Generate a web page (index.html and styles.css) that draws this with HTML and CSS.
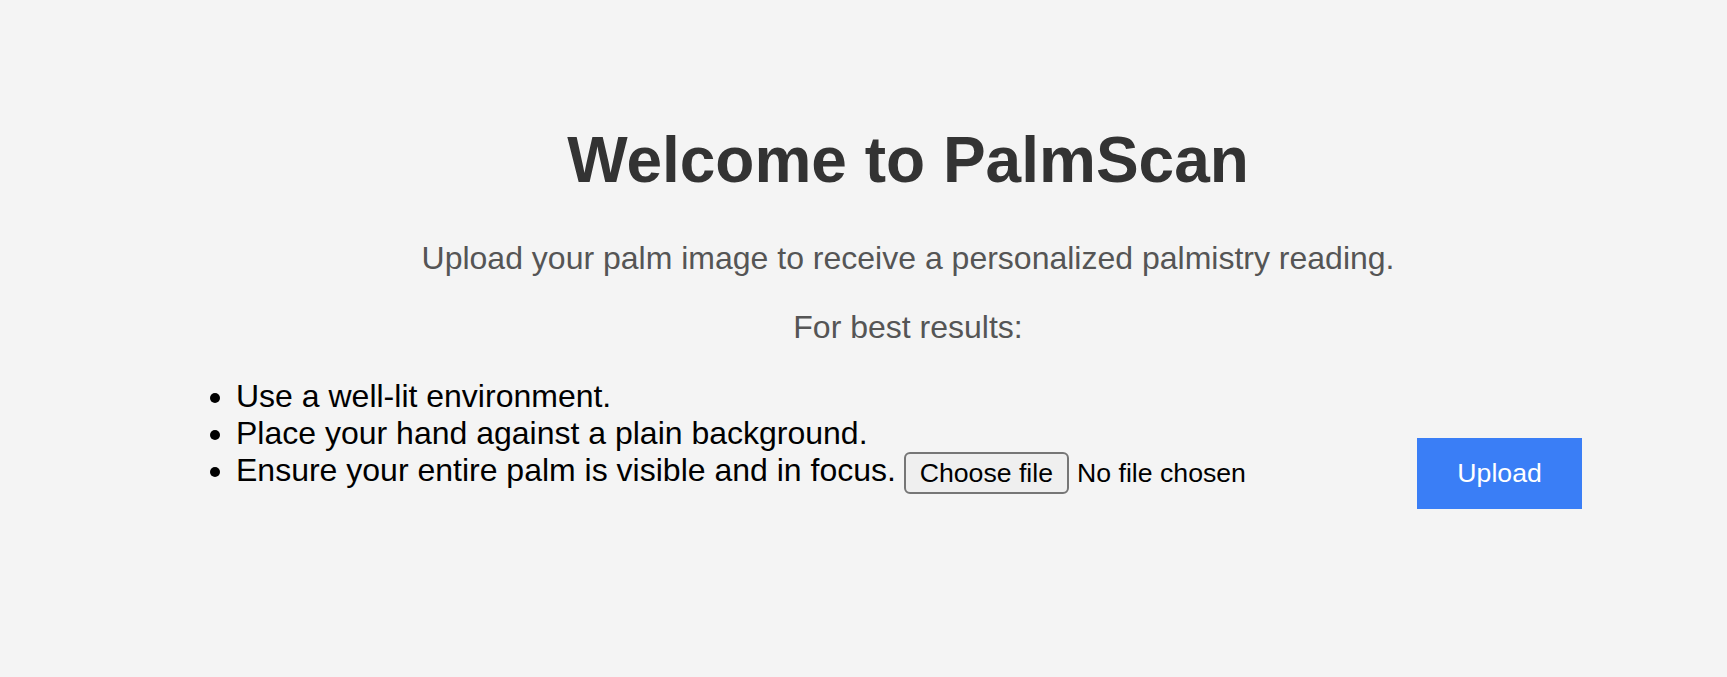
FILE: index.html
```html
<!DOCTYPE html>
<html lang="en">
<head>
<meta charset="utf-8">
<title>PalmScan</title>
<link rel="stylesheet" href="styles.css">
</head>
<body>
<main class="container">
  <h1 class="title">Welcome to PalmScan</h1>
  <p class="subtitle">Upload your palm image to receive a personalized palmistry reading.</p>
  <p class="subtitle">For best results:</p>
  <form class="upload-row">
    <ul class="tips">
      <li>Use a well-lit environment.</li>
      <li>Place your hand against a plain background.</li>
      <li>Ensure your entire palm is visible and in focus.</li>
    </ul>
    <label class="file-picker">
      <input class="file-input" type="file" accept="image/*">
      <span class="file-btn">Choose file</span>
      <span class="file-name">No file chosen</span>
    </label>
    <button class="upload-btn" type="submit">Upload</button>
  </form>
</main>
</body>
</html>
```

FILE: styles.css
```css
html, body {
  margin: 0;
  padding: 0;
}

body {
  background: #f4f4f4;
  font-family: "Liberation Sans", Arial, Helvetica, sans-serif;
  font-size: 32px;
  color: #000;
}

.container {
  margin: 0 67px 0 156px;
  padding-top: 80px;
}

.title {
  font-size: 64px;
  font-weight: bold;
  color: #333;
  text-align: center;
  margin: 42.88px 0;
}

.subtitle {
  color: #555;
  text-align: center;
  margin: 32px 0;
}

.upload-row {
  display: flex;
  align-items: flex-start;
}

.tips {
  margin: 0;
  padding-left: 80px;
}

.file-picker {
  display: flex;
  align-items: center;
  width: 506px;
  margin: 74.6px 0 0 7.8px;
  font-size: 26.67px;
  color: #000;
  cursor: pointer;
}

.file-input {
  position: absolute;
  width: 1px;
  height: 1px;
  opacity: 0;
  overflow: hidden;
  pointer-events: none;
}

.file-btn {
  box-sizing: border-box;
  height: 42px;
  display: flex;
  align-items: center;
  padding: 0 14px;
  margin-right: 8px;
  border: 2px solid #767676;
  border-radius: 6px;
  background: #efefef;
  line-height: 1;
}

.file-name {
  white-space: nowrap;
}

.upload-btn {
  margin: 60px 0 0 7.7px;
  padding: 20px 40px;
  border: none;
  border-radius: 0;
  background: #3a7ef6;
  color: #fff;
  font-family: "Liberation Sans", Arial, Helvetica, sans-serif;
  font-size: 26.67px;
  line-height: normal;
  cursor: pointer;
}
```
